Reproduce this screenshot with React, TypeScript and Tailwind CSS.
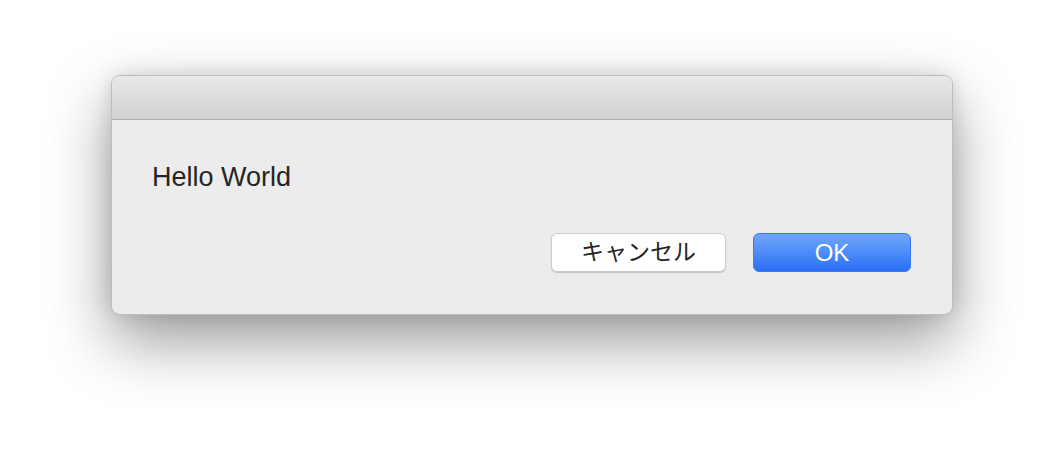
import React from 'react';

export default function App() {
  return (
    <div className="w-[1064px] h-[462px] bg-white pt-[75px] pl-[111px]" style={{ fontFamily: '"Liberation Sans", "Noto Sans CJK JP", sans-serif' }}>
      <div className="w-[842px] h-[240px] rounded-[9px] border border-[#bcbcbc] bg-[#ececec] overflow-hidden shadow-[0_26px_64px_rgba(0,0,0,0.4),0_0_20px_rgba(0,0,0,0.12)] flex flex-col">
        <div className="h-[44px] shrink-0 border-b border-[#adadad] bg-gradient-to-b from-[#e8e8e8] to-[#d2d2d2]" />
        <div className="flex-1 flex flex-col pl-[40px] pr-[41px]">
          <p className="mt-[42px] text-[27px] leading-[30px] text-[#262626]">Hello World</p>
          <div className="mt-[41px] flex justify-end gap-[27px]">
            <button className="w-[175px] h-[39px] rounded-[6px] bg-white border border-[#cbcbcb] shadow-[0_1px_1px_rgba(0,0,0,0.18)] text-[23px] text-[#262626] flex items-center justify-center">
              キャンセル
            </button>
            <button className="w-[158px] h-[39px] rounded-[6px] bg-gradient-to-b from-[#70a6fa] to-[#2b6ef6] border border-[#3b7af5] text-[24px] text-white flex items-center justify-center">
              OK
            </button>
          </div>
        </div>
      </div>
    </div>
  );
}
